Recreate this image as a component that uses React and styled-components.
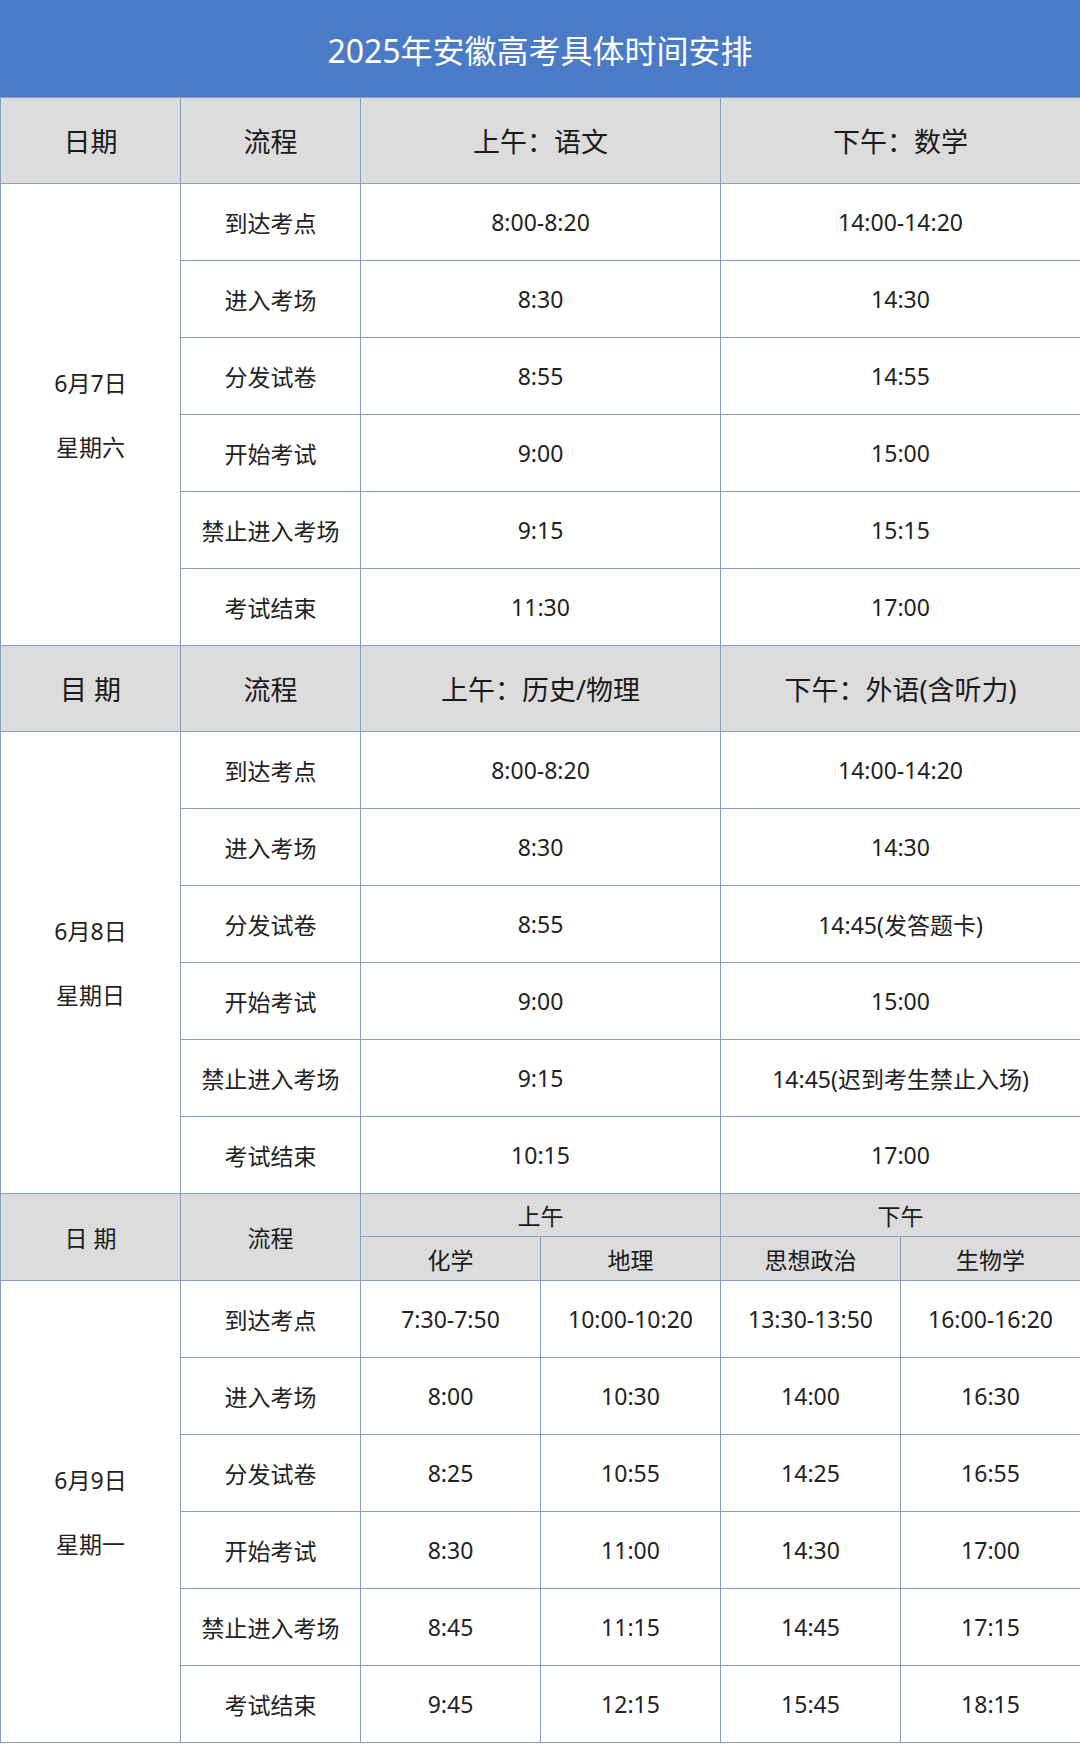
import React from "react";
import styled, { createGlobalStyle } from "styled-components";

const GlobalStyle = createGlobalStyle`
  body {
    margin: 0;
    background: #ffffff;
    font-family: "Noto Sans", "Noto Sans CJK SC", sans-serif;
    color: #1f1f1f;
  }
`;

const Page = styled.div`
  width: 1080px;
`;

const TitleBar = styled.div`
  height: 97px;
  background: #4a7bc7;
  color: #ffffff;
  display: flex;
  align-items: center;
  justify-content: center;
  font-size: 32px;
`;

const Table = styled.table`
  width: 1080px;
  table-layout: fixed;
  border-collapse: collapse;
  border-spacing: 0;
`;

const HeadRow = styled.tr`
  height: ${props => props.h || 86}px;
  background: #dcdcdc;
`;

const Row = styled.tr`
  height: 77px;
`;

const HeadCell = styled.td`
  border: 1px solid #8a9dba;
  text-align: center;
  vertical-align: middle;
  font-size: ${props => props.size || 27}px;
  color: #1a1a1a;
  padding: 0;
`;

const Cell = styled.td`
  border: 1px solid #8a9dba;
  text-align: center;
  vertical-align: middle;
  font-size: 23px;
  color: #222;
  padding: 0;
`;

const DateCell = styled(Cell)`
  background: #ffffff;
`;

const DateLine = styled.div`
  line-height: 64px;
`;

const steps = ["到达考点", "进入考场", "分发试卷", "开始考试", "禁止进入考场", "考试结束"];

const day1 = [
  ["8:00-8:20", "14:00-14:20"],
  ["8:30", "14:30"],
  ["8:55", "14:55"],
  ["9:00", "15:00"],
  ["9:15", "15:15"],
  ["11:30", "17:00"]
];

const day2 = [
  ["8:00-8:20", "14:00-14:20"],
  ["8:30", "14:30"],
  ["8:55", "14:45(发答题卡)"],
  ["9:00", "15:00"],
  ["9:15", "14:45(迟到考生禁止入场)"],
  ["10:15", "17:00"]
];

const day3 = [
  ["7:30-7:50", "10:00-10:20", "13:30-13:50", "16:00-16:20"],
  ["8:00", "10:30", "14:00", "16:30"],
  ["8:25", "10:55", "14:25", "16:55"],
  ["8:30", "11:00", "14:30", "17:00"],
  ["8:45", "11:15", "14:45", "17:15"],
  ["9:45", "12:15", "15:45", "18:15"]
];

const TwoSlotDay = ({ date, week, rows }) =>
  rows.map((r, i) => (
    <Row key={i}>
      {i === 0 && (
        <DateCell rowSpan={6}>
          <DateLine>{date}</DateLine>
          <DateLine>{week}</DateLine>
        </DateCell>
      )}
      <Cell>{steps[i]}</Cell>
      <Cell colSpan={2}>{r[0]}</Cell>
      <Cell colSpan={2}>{r[1]}</Cell>
    </Row>
  ));

export default function App() {
  return (
    <Page>
      <GlobalStyle />
      <TitleBar>2025年安徽高考具体时间安排</TitleBar>
      <Table>
        <colgroup>
          {[0, 1, 2, 3, 4, 5].map(i => (
            <col key={i} style={{ width: 180 }} />
          ))}
        </colgroup>
        <tbody>
          <HeadRow>
            <HeadCell>日期</HeadCell>
            <HeadCell>流程</HeadCell>
            <HeadCell colSpan={2}>上午：语文</HeadCell>
            <HeadCell colSpan={2}>下午：数学</HeadCell>
          </HeadRow>
          <TwoSlotDay date="6月7日" week="星期六" rows={day1} />
          <HeadRow>
            <HeadCell>目 期</HeadCell>
            <HeadCell>流程</HeadCell>
            <HeadCell colSpan={2}>上午：历史/物理</HeadCell>
            <HeadCell colSpan={2}>下午：外语(含听力)</HeadCell>
          </HeadRow>
          <TwoSlotDay date="6月8日" week="星期日" rows={day2} />
          <HeadRow h={43}>
            <HeadCell rowSpan={2} size={23}>日 期</HeadCell>
            <HeadCell rowSpan={2} size={23}>流程</HeadCell>
            <HeadCell colSpan={2} size={23}>上午</HeadCell>
            <HeadCell colSpan={2} size={23}>下午</HeadCell>
          </HeadRow>
          <HeadRow h={44}>
            <HeadCell size={23}>化学</HeadCell>
            <HeadCell size={23}>地理</HeadCell>
            <HeadCell size={23}>思想政治</HeadCell>
            <HeadCell size={23}>生物学</HeadCell>
          </HeadRow>
          {day3.map((r, i) => (
            <Row key={i}>
              {i === 0 && (
                <DateCell rowSpan={6}>
                  <DateLine>6月9日</DateLine>
                  <DateLine>星期一</DateLine>
                </DateCell>
              )}
              <Cell>{steps[i]}</Cell>
              {r.map((t, j) => (
                <Cell key={j}>{t}</Cell>
              ))}
            </Row>
          ))}
        </tbody>
      </Table>
    </Page>
  );
}
